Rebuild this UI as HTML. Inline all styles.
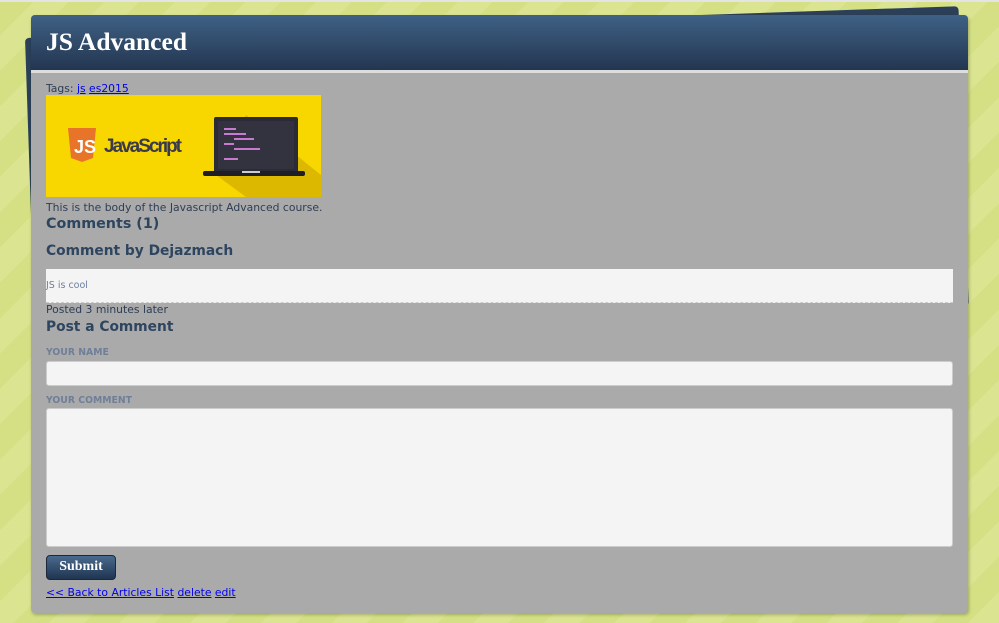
<!DOCTYPE html>
<html><head><meta charset="utf-8"><style>
*{box-sizing:border-box;margin:0;padding:0}
html,body{width:999px;height:623px;overflow:hidden}
body{background:#d8e38c repeating-linear-gradient(135deg,#d5e084 0 25px,#dae491 25px 50px);font-family:"DejaVu Sans",Verdana,sans-serif;font-size:10.8px;color:#2e3e55;position:relative}
.top{position:absolute;left:0;top:0;width:999px;height:2px;background:#e4e4e4}
.back{position:absolute;left:25px;top:38px;width:934px;height:300px;background:#2b4058;border-radius:4px;transform:rotate(-1.95deg);transform-origin:left top}
.panel{position:absolute;left:31px;top:15px;width:937px;height:598px;background:#aaaaaa;border-radius:4px;box-shadow:1px 2px 3px rgba(0,0,0,.25);overflow:hidden}
.hd{background:linear-gradient(#3f6185,#233650);border-bottom:3px solid #dcdcdc;height:58px}
.hd h1{font-family:"Liberation Serif",serif;font-size:25.5px;color:#fff;padding:12px 0 0 15px;font-weight:bold}
.c{position:absolute;left:15px;width:907px}
a{color:#0000ee}
h3{font-size:13.8px;font-weight:bold;color:#2e4560}
.lbl{font-size:9.3px;font-weight:bold;color:#6f7f99}
.inp{background:#f4f4f4;border:1px solid #ccc;border-radius:3px}
</style></head><body>
<div class="top"></div>
<div class="back"></div>
<div class="panel">
<div class="hd"><h1>JS Advanced</h1></div>
<div class="c" style="top:67px">Tags: <a href="#">js</a> <a href="#">es2015</a></div>
<div class="c" style="top:80px;width:275px;height:102px;background:#f8d600;overflow:hidden">
<svg width="275" height="102" viewBox="0 0 275 102">
<polygon points="200,20 275,80 275,102 200,102 170,80" fill="#dcb800"/>
<path d="M22 33h28l-3 30-11 4-11-4z" fill="#e8742a"/>
<text x="28" y="58" font-family="Liberation Sans" font-weight="bold" font-size="18" fill="#fff">JS</text>
<text x="58" y="57" font-family="Liberation Sans" font-weight="bold" font-size="19" fill="#3a3a4a" textLength="78">JavaScript</text>
<rect x="168" y="22" width="84" height="56" rx="2" fill="#2a2b36"/>
<rect x="172" y="26" width="76" height="48" fill="#32333f"/>
<rect x="157" y="76" width="102" height="5" rx="2" fill="#1d1e26"/>
<rect x="196" y="76" width="18" height="2" fill="#ccc"/>
<g fill="#c77ad0"><rect x="178" y="33" width="12" height="2"/><rect x="178" y="38" width="22" height="2"/><rect x="188" y="43" width="20" height="2"/><rect x="178" y="48" width="10" height="2"/><rect x="188" y="53" width="26" height="2"/><rect x="178" y="63" width="14" height="2"/></g>
</svg></div>
<div class="c" style="top:186px">This is the body of the Javascript Advanced course.</div>
<h3 class="c" style="top:201px;font-size:14.3px">Comments (1)</h3>
<h3 class="c" style="top:228px">Comment by Dejazmach</h3>
<div class="c" style="top:254px;height:34px;background:#f4f4f4;border-bottom:1px dashed #ccc;font-size:9.5px;color:#6b7ea0;padding-top:11px">JS is cool</div>
<div class="c" style="top:288px">Posted 3 minutes later</div>
<h3 class="c" style="top:304px">Post a Comment</h3>
<div class="c lbl" style="top:332px">YOUR NAME</div>
<div class="c inp" style="top:346px;height:25px"></div>
<div class="c lbl" style="top:380px">YOUR COMMENT</div>
<div class="c inp" style="top:393px;height:139px"></div>
<div style="position:absolute;left:15px;top:540px;width:70px;height:25px;border-radius:4px;background:linear-gradient(#4a6a8e,#1f3550);border:1px solid #1a2a3c;color:#fff;font-family:'Liberation Serif',serif;font-weight:bold;font-size:14px;text-align:center;line-height:22px">Submit</div>
<div class="c" style="top:571px"><a href="#">&lt;&lt; Back to Articles List</a> <a href="#">delete</a> <a href="#">edit</a></div>
</div>
</body></html>
